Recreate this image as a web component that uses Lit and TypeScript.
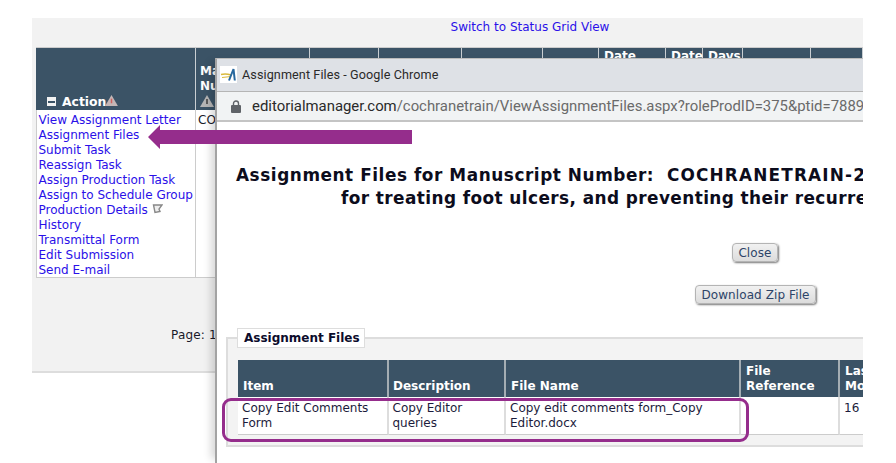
import { LitElement, html, css } from "lit";
import { customElement } from "lit/decorators.js";

const actions = ["View Assignment Letter","Assignment Files","Submit Task","Reassign Task","Assign Production Task","Assign to Schedule Group","Production Details","History","Transmittal Form","Edit Submission","Send E-mail"];
const bgCols = [160,114,69,83,81,56,67,37,40,68,52];

@customElement("app-root")
export class AppRoot extends LitElement {
  static styles = css`
    :host { display:block; width:896px; height:463px; position:relative; overflow:hidden; background:#fff; font-family:"DejaVu Sans",sans-serif; font-size:12px; color:#1a1a2a; }
    .page { margin:18px 0 0 32px; width:831px; height:352px; background:#f2f2f2; border-bottom:2px solid #ddd; padding-top:1px; box-sizing:content-box; }
    a { color:#2a10e8; text-decoration:none; }
    .switch { text-align:center; height:28px; line-height:16px; padding-left:165px; }
    .grid { margin-left:4px; display:flex; flex-direction:column; width:827px; }
    .ghead { display:flex; height:63px; background:#3b5366; border-top:1px solid #ccc; box-sizing:border-box; overflow:hidden; }
    .gh { border-right:1px solid #c9ced2; box-sizing:border-box; color:#fff; font-weight:700; font-size:12px; line-height:15px; padding:1px 0 0 5px; flex:none; }
    .gh.first { display:flex; align-items:flex-end; padding:0 0 1px 11px; font-size:12.4px; }
    .gh.ms { padding:16px 0 0 4px; }
    .gbody { display:flex; height:168px; }
    .acol { width:160px; background:#fff; border:1px solid #ccc; border-top:0; box-sizing:border-box; padding:3px 0 0 1.500px; display:flex; flex-direction:column; }
    .acol a { line-height:15px; white-space:nowrap; display:flex; align-items:center; gap:4px; }
    .ccol { width:114px; background:#fff; border-bottom:1px solid #ccc; padding:3px 0 0 2px; box-sizing:border-box; height:168px; border-right:1px solid #ccc; }
    .rest { flex:1; border-bottom:2px solid #ddd; height:168px; box-sizing:border-box; }
    .pager { padding:49px 0 0 139px; line-height:16px; letter-spacing:.2px; }
    .minus { width:9px; height:9px; background:#f2f2f2; margin:0 6px 3px 0; display:flex; align-items:center; justify-content:center; flex:none; }
    .minus::before { content:""; width:7px; height:2px; background:#3b5366; }
    .win { position:absolute; left:215px; top:58px; width:648px; height:405px; background:#fff; overflow:hidden; border-left:2px solid #a3a3a3; border-top:1px solid #bbb; box-sizing:border-box; box-shadow:-8px 0 8px -4px rgba(0,0,0,.16); }
    .title { height:33px; background:#dee1e6; border-bottom:1px solid #b5b5b5; box-sizing:border-box; display:flex; align-items:center; padding:0 0 2px 3px; gap:5px; font-family:"Roboto","Noto Sans",sans-serif; font-size:12.6px; color:#2a2a2a; letter-spacing:.1px; }
    .logo { width:17px; height:17px; background:#fff; flex:none; display:block; }
    .addr { height:30px; background:#f1f3f4; border-bottom:2px solid #c4c4c4; box-sizing:border-box; display:flex; align-items:center; padding-left:14px; gap:11px; font-family:"Roboto","Noto Sans",sans-serif; font-size:14.9px; color:#6a6a6a; white-space:nowrap; }
    .addr b { font-weight:400; color:#2a2a2a; }
    .lock { width:10px; height:13px; flex:none; display:block; }
    .body { display:flex; flex-direction:column; }
    h1 { margin:0; font-size:16.9px; letter-spacing:.55px; line-height:23px; font-weight:700; color:#0c0c1c; white-space:nowrap; }
    h1.l1 { margin:42px 0 0 19px; }
    h1.l1 span { letter-spacing:1.150px; }
    h1.l2 { margin-left:124px; letter-spacing:.42px; }
    .btn { border:1px solid #b4b4b4; border-radius:4px; background:linear-gradient(#f1f1f1,#dcdcdc); box-shadow:1px 1px 2px #777; color:#2d4468; font:12px "DejaVu Sans",sans-serif; letter-spacing:.1px; height:19px; padding:0; box-sizing:border-box; line-height:16px; }
    .close { width:46px; margin:33px 0 0 515px; }
    .dl { width:121px; margin:23px 0 0 478px; }
    .field { position:relative; margin:33px 0 0 9px; width:640px; height:110px; border:2px solid #ddd; border-right:0; background:#f3f3f3; box-sizing:border-box; padding:21px 0 0 10px; }
    .legend { position:absolute; left:9px; top:-11px; width:128px; height:20px; background:#fff; border:1px solid #ddd; box-sizing:border-box; font-weight:700; font-size:12px; color:#0c0c2c; line-height:18px; padding-left:6px; white-space:nowrap; }
    .ftable { display:grid; grid-template-columns:151px 117px 235px 99px 40px; width:642px; background:#fff; }
    .fh { height:37px; background:#3b5366; color:#fff; font-weight:700; line-height:15px; display:flex; align-items:flex-end; padding:0 0 3px 5px; box-sizing:border-box; border-right:2px solid #a4adb3; overflow:hidden; white-space:nowrap; }
    .fh.tight { padding-left:4px; }
    .fd { height:38px; background:#fff; padding:4px 0 0 4px; line-height:15px; border-right:2px solid #ddd; border-bottom:1px solid #ccc; box-sizing:border-box; color:#1c1c3c; overflow:hidden; }
    .fd.tight { padding-left:3.500px; }
    .mark { position:absolute; left:222px; top:398px; width:527px; height:44px; border:3px solid #952d8c; border-radius:9px; box-sizing:border-box; }
    .arrow { position:absolute; left:147px; top:124px; width:266px; height:26px; display:block; }
    .flag { width:11px; height:11px; display:block; flex:none; margin-top:-3px; }
    .warn { width:13px; height:11px; display:block; flex:none; margin:0 0 3px -1px; }
    .warn2 { width:14px; height:12px; display:block; margin-top:1px; }
  `;
  render() {
    return html`
      <div class="page">
        <div class="switch"><a href="#">Switch to Status Grid View</a></div>
        <div class="grid">
          <div class="ghead">
            ${bgCols.map((w,i)=> i===0 ? html`<div class="gh first" style="width:${w}px"><span class="minus"></span><span>Action</span><svg class="warn" viewBox="0 0 14 12"><path d="M7 0 14 12H0Z" fill="#c4b6b6"/><path d="M7 4v5" stroke="#d0605d" stroke-width="1.6"/></svg></div>`
              : i===1 ? html`<div class="gh ms" style="width:${w}px">Ma<br>Nu<svg class="warn2" viewBox="0 0 14 12"><path d="M7 0 14 12H0Z" fill="#b5b5b5"/><path d="M7 4v5" stroke="#444" stroke-width="1.6"/></svg></div>`
              : i===6 || i===7 ? html`<div class="gh" style="width:${w}px">Date</div>`
              : i===8 ? html`<div class="gh" style="width:${w}px">Days</div>`
              : html`<div class="gh" style="width:${w}px"></div>`)}
          </div>
          <div class="gbody">
            <div class="acol">${actions.map(a=>html`<a href="#">${a}${a==="Production Details"?html`<svg class="flag" viewBox="0 0 11 11"><path d="M1.5 1H10L7 5 8 7.500 3 8.500Z" fill="#eee" stroke="#888" stroke-width="1.4"/></svg>`:""}</a>`)}</div>
            <div class="ccol">CO</div>
            <div class="rest"></div>
          </div>
        </div>
        <div class="pager">Page: 1</div>
      </div>

      <div class="win">
        <div class="title">
          <svg class="logo" viewBox="0 0 17 17"><path d="M1 8.500C5 7.500 8 8 11 9" stroke="#d9b93c" stroke-width="1.400" fill="none"/><path d="M2 11.500 11 10.500" stroke="#d9b93c" stroke-width="1.200"/><path d="M9 14.500 13.500 3 14.800 14.500" stroke="#27689f" stroke-width="2" fill="none"/></svg>
          <span>Assignment Files - Google Chrome</span>
        </div>
        <div class="addr">
          <svg class="lock" viewBox="0 0 10 13"><path d="M2.500 6V3.500a2.500 2.500 0 0 1 5 0V6" fill="none" stroke="#5f6368" stroke-width="1.400"/><rect y="5" width="10" height="8" rx="1" fill="#5f6368"/></svg>
          <span><b>editorialmanager.com</b>/cochranetrain/ViewAssignmentFiles.aspx?roleProdID=375&amp;ptid=7889</span>
        </div>
        <div class="body">
          <h1 class="l1">Assignment Files for Manuscript Number:&nbsp; <span>COCHRANETRAIN-2</span></h1>
          <h1 class="l2">for treating foot ulcers, and preventing their recurrence</h1>
          <button class="btn close">Close</button>
          <button class="btn dl">Download Zip File</button>
          <div class="field">
            <div class="legend">Assignment Files</div>
            <div class="ftable">
              <div class="fh">Item</div><div class="fh tight">Description</div><div class="fh">File Name</div><div class="fh">File<br>Reference</div><div class="fh">Last<br>Mod</div>
              <div class="fd">Copy Edit Comments Form</div><div class="fd tight">Copy Editor queries</div><div class="fd">Copy edit comments form_Copy Editor.docx</div><div class="fd"></div><div class="fd">16</div>
            </div>
          </div>
        </div>
      </div>

      <div class="mark"></div>
      <svg class="arrow" viewBox="0 0 266 26"><path d="M1 13 13 1V6H265V20H13V25Z" fill="#952d8c"/></svg>
    `;
  }
}
